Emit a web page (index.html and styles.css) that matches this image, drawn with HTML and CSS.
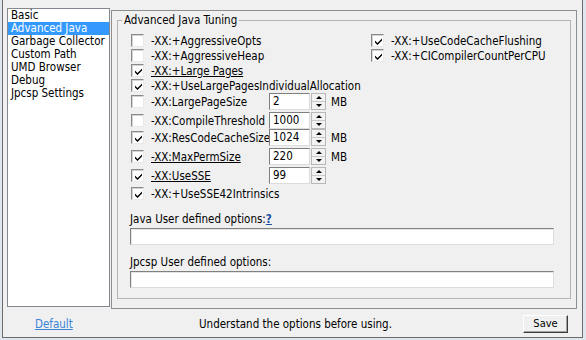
FILE: index.html
```html
<!DOCTYPE html>
<html lang="en">
<head>
    <meta charset="UTF-8">
    <title>Jpcsp Settings</title>
    <link rel="stylesheet" href="styles.css">
</head>
<body>
<div class="window">
    <div class="main">
        <ul class="nav">
            <li>Basic</li>
            <li class="selected">Advanced Java</li>
            <li>Garbage Collector</li>
            <li>Custom Path</li>
            <li>UMD Browser</li>
            <li>Debug</li>
            <li>Jpcsp Settings</li>
        </ul>
        <div class="panel">
            <fieldset class="group">
                <legend>Advanced Java Tuning</legend>
                <div class="group-body">
                    <div class="options">
                        <div class="col col-left">
                            <div class="row"><span class="check"></span><span class="label">-XX:+AggressiveOpts</span></div>
                            <div class="row"><span class="check"></span><span class="label">-XX:+AggressiveHeap</span></div>
                            <div class="row"><span class="check on"><svg viewBox="0 0 7 7" width="7" height="7"><polygon points="0,2.5 2.5,5 7,0.5 7,2.5 2.5,7 0,4.5"/></svg></span><span class="label u">-XX:+Large Pages</span></div>
                            <div class="row"><span class="check on"><svg viewBox="0 0 7 7" width="7" height="7"><polygon points="0,2.5 2.5,5 7,0.5 7,2.5 2.5,7 0,4.5"/></svg></span><span class="label">-XX:+UseLargePagesIndividualAllocation</span></div>
                            <div class="row spin">
                                <span class="check"></span><span class="label clip">-XX:LargePageSize</span>
                                <span class="input">2</span><span class="spinner"><i class="up"></i><i class="down"></i></span><span class="unit">MB</span>
                            </div>
                            <div class="row spin tight">
                                <span class="check"></span><span class="label clip">-XX:CompileThreshold</span>
                                <span class="input">1000</span><span class="spinner"><i class="up"></i><i class="down"></i></span>
                            </div>
                            <div class="row spin">
                                <span class="check on"><svg viewBox="0 0 7 7" width="7" height="7"><polygon points="0,2.5 2.5,5 7,0.5 7,2.5 2.5,7 0,4.5"/></svg></span><span class="label clip">-XX:ResCodeCacheSize</span>
                                <span class="input">1024</span><span class="spinner"><i class="up"></i><i class="down"></i></span><span class="unit">MB</span>
                            </div>
                            <div class="row spin">
                                <span class="check on"><svg viewBox="0 0 7 7" width="7" height="7"><polygon points="0,2.5 2.5,5 7,0.5 7,2.5 2.5,7 0,4.5"/></svg></span><span class="label clip"><span class="u">-XX:MaxPermSize</span></span>
                                <span class="input">220</span><span class="spinner"><i class="up"></i><i class="down"></i></span><span class="unit">MB</span>
                            </div>
                            <div class="row spin">
                                <span class="check on"><svg viewBox="0 0 7 7" width="7" height="7"><polygon points="0,2.5 2.5,5 7,0.5 7,2.5 2.5,7 0,4.5"/></svg></span><span class="label clip"><span class="u">-XX:UseSSE</span></span>
                                <span class="input">99</span><span class="spinner"><i class="up"></i><i class="down"></i></span>
                            </div>
                            <div class="row"><span class="check on"><svg viewBox="0 0 7 7" width="7" height="7"><polygon points="0,2.5 2.5,5 7,0.5 7,2.5 2.5,7 0,4.5"/></svg></span><span class="label">-XX:+UseSSE42Intrinsics</span></div>
                        </div>
                        <div class="col col-right">
                            <div class="row"><span class="check on"><svg viewBox="0 0 7 7" width="7" height="7"><polygon points="0,2.5 2.5,5 7,0.5 7,2.5 2.5,7 0,4.5"/></svg></span><span class="label">-XX:+UseCodeCacheFlushing</span></div>
                            <div class="row"><span class="check on"><svg viewBox="0 0 7 7" width="7" height="7"><polygon points="0,2.5 2.5,5 7,0.5 7,2.5 2.5,7 0,4.5"/></svg></span><span class="label">-XX:+CICompilerCountPerCPU</span></div>
                        </div>
                    </div>

                    <div class="field-label first">Java User defined options:<a href="javascript:void(0);" class="help">?</a></div>
                    <div class="textbox"></div>
                    <div class="field-label">Jpcsp User defined options:</div>
                    <div class="textbox"></div>
                </div>
            </fieldset>
        </div>
    </div>
    <div class="footer">
        <span class="link-box"><a href="javascript:void(0);" class="default">Default</a></span>
        <span class="hint">Understand the options before using.</span>
        <button class="save">Save</button>
    </div>
</div>
</body>
</html>
```

FILE: styles.css
```css
*{
    margin: 0;
    padding: 0;
    box-sizing: border-box;
}

body{
    background: #dfe6ed;
    font-family: "DejaVu Sans Condensed", "DejaVu Sans", sans-serif;
    font-size: 11.5px;
    color: #000;
}

.window{
    margin-left: 2px;
    width: 581px;
    height: 338px;
    background: #f0f0f0;
    border: 1px solid #6b6b6b;
    border-top: 0;
    display: flex;
    flex-direction: column;
}

.main{
    display: flex;
    padding: 8px 0 0 4px;
}

/* liste de gauche */
.nav{
    list-style: none;
    width: 103px;
    height: 299px;
    background: #fff;
    border: 1px solid #828790;
}
.nav li{
    height: 13px;
    line-height: 13px;
    padding-left: 3px;
    white-space: nowrap;
}
.nav li.selected{
    background: #3399ff;
    color: #fff;
}

.panel{
    margin: 2px 0 0 1px;
    width: 466px;
    height: 299px;
    border: 1px solid #8e8f8f;
    padding: 3px 5px 0 5px;
}

.group{
    height: 285px;
    border: 1px solid #b4b4b4;
    padding: 0 0 0 4px;
    min-width: 0;
}
.group legend{
    padding: 0 2px;
    line-height: 13px;
}
.group-body{
    padding: 6px 0 0 9px;
}

.options{
    display: flex;
}
.col-left{
    width: 240px;
}

.row{
    display: flex;
    align-items: center;
    height: 15px;
    white-space: nowrap;
}
.row.spin{
    height: 17px;
    margin-bottom: 2px;
}
.row.spin.tight{
    margin-bottom: 0;
}

.check{
    width: 13px;
    height: 13px;
    flex: none;
    background: #fff;
    border: 1px solid;
    border-color: #8a8a8a #e9e9e9 #e9e9e9 #8a8a8a;
    box-shadow: inset 1px 1px 0 #d4d4d4;
    display: flex;
    align-items: center;
    justify-content: center;
    margin-right: 7px;
}
.check svg{
    display: block;
    margin: 1px 0 0 1px;
}

.label.u, .u{
    text-decoration: underline;
}
.label.clip{
    width: 118px;
    overflow: hidden;
}

.input{
    width: 41px;
    height: 17px;
    line-height: 15px;
    background: #fff;
    border: 1px solid;
    border-color: #7f7f7f #dcdcdc #dcdcdc #7f7f7f;
    padding-left: 3px;
}
.spinner{
    width: 15px;
    height: 17px;
    margin-left: 1px;
    display: flex;
    flex-direction: column;
    border: 1px solid #b8b8b8;
    background: #f2f2f2;
}
.spinner i{
    flex: 1;
    display: flex;
    align-items: center;
    justify-content: center;
}
.spinner i.up{
    border-bottom: 1px solid #c8c8c8;
}
.spinner i::before{
    content: "";
    width: 0;
    height: 0;
    border-left: 3px solid transparent;
    border-right: 3px solid transparent;
}
.spinner i.up::before{
    border-bottom: 3px solid #000;
}
.spinner i.down::before{
    border-top: 3px solid #000;
}
.unit{
    margin-left: 5px;
}

.field-label{
    line-height: 13px;
    margin-top: 11px;
    margin-left: -1px;
}
.field-label.first{
    margin-top: 12px;
}
.help{
    color: #1c4fa3;
    font-weight: bold;
}
.textbox{
    width: 424px;
    height: 17px;
    margin: 2px 0 0 -1px;
    background: #fff;
    border: 1px solid;
    border-color: #808080 #dcdcdc #dcdcdc #808080;
    box-shadow: inset 1px 1px 0 #e6e6e6;
}

.footer{
    flex: 1;
    display: flex;
    align-items: center;
    padding-left: 32px;
    padding-top: 1px;
}
.link-box{
    width: 164px;
}
.default{
    color: #3a84d8;
}
.save{
    margin-left: auto;
    margin-right: 14px;
    width: 45px;
    height: 18px;
    font-family: inherit;
    font-size: 11px;
    background: #f0f0f0;
    border: 1px solid;
    border-color: #fff #3c3c3c #3c3c3c #fff;
    box-shadow: inset -1px -1px 0 #a0a0a0;
}
```
